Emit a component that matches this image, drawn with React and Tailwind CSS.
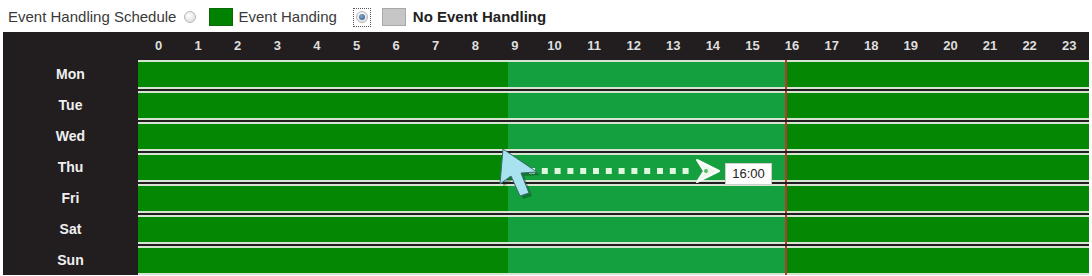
import React from "react";

const days = ["Mon", "Tue", "Wed", "Thu", "Fri", "Sat", "Sun"];
const hours = Array.from({ length: 24 }, (_, i) => i);

function Radio({ checked }) {
  return (
    <span className="relative inline-flex h-[12px] w-[12px] items-center justify-center rounded-full border border-[#b8b8b8] bg-[radial-gradient(circle_at_40%_35%,#ffffff,#d6d6d6)]">
      {checked && <span className="h-[6px] w-[6px] rounded-full bg-[radial-gradient(circle_at_40%_35%,#7fa6c9,#2b5a86)]" />}
    </span>
  );
}

function Row() {
  const seg = "h-full border-y-2 border-[#d6e4d2]";
  return (
    <div className="flex h-[29px]">
      <div className={`${seg} w-[370px] bg-[#048804]`} />
      <div className={`${seg} w-[277px] bg-[#14a03e]`} />
      <div className="h-full w-[2px] bg-[#b83a2a]" />
      <div className={`${seg} flex-1 bg-[#048804]`} />
    </div>
  );
}

export default function App() {
  const dots = Array.from({ length: 13 }, (_, i) => 532 + i * 12.8);
  return (
    <div className="relative h-[276px] w-[1092px] overflow-hidden bg-white font-['Liberation_Sans',Arial,sans-serif]">
      {/* legend */}
      <div className="flex h-[32px] items-center pl-[8px] pt-[2px] text-[15px] text-[#3a3a3a]">
        <span>Event Handling Schedule</span>
        <span className="ml-[8px] flex"><Radio /></span>
        <span className="ml-[13px] h-[18px] w-[24px] border border-[#0a6a0a] bg-[#008200]" />
        <span className="ml-[5px]">Event Handing</span>
        <span className="ml-[16px] flex h-[19px] w-[18px] items-center justify-center border border-dotted border-[#555]">
          <Radio checked />
        </span>
        <span className="ml-[11px] h-[18px] w-[24px] border border-[#a8a8a8] bg-[#c6c6c6]" />
        <span className="ml-[7px] font-bold text-[#222]">No Event Handling</span>
      </div>

      {/* table */}
      <div className="ml-[3px] w-[1086px] bg-[#221e1f]">
        <div className="flex h-[28px] items-center">
          <div className="w-[136px]" />
          {hours.map((h) => (
            <div key={h} className="w-[39.6px] shrink-0 text-center text-[13px] font-bold text-[#dedede]">
              {h}
            </div>
          ))}
        </div>
        <div className="flex">
          <div className="flex w-[135px] flex-col gap-[2px]">
            {days.map((d) => (
              <div key={d} className="flex h-[29px] items-center justify-center text-[14px] font-bold text-[#f0f0f0]">
                {d}
              </div>
            ))}
          </div>
          <div className="flex flex-1 flex-col gap-[2px]">
            {days.map((d) => (
              <Row key={d} />
            ))}
          </div>
        </div>
      </div>

      {/* drag overlay */}
      <svg className="pointer-events-none absolute left-0 top-0" width="1092" height="276">
        {dots.map((x, i) => (
          <rect key={i} x={x - 3} y={168} width="6" height="6" fill="#dff7df" />
        ))}
        <polygon points="697,160 719,171 697,182 704,171" fill="#eaf9ea" stroke="#ffffff" strokeWidth="2" strokeLinejoin="round" />
        <circle cx="706" cy="171" r="2" fill="#5cb96f" />
        <polygon points="506,152 503,187 514,179 523,199 532,196 524,176 540,175" fill="#0a2a10" opacity="0.35" />
        <polygon points="503,149 500,184 511,176 520,196 529,193 521,173 537,172" fill="#a9e2ef" stroke="#3b6b74" strokeWidth="1" strokeLinejoin="round" />
      </svg>
      <div className="absolute left-[725px] top-[163px] flex h-[22px] w-[47px] items-center justify-center border border-[#cfcfcf] bg-white text-[13px] text-[#222]">
        16:00
      </div>
    </div>
  );
}
